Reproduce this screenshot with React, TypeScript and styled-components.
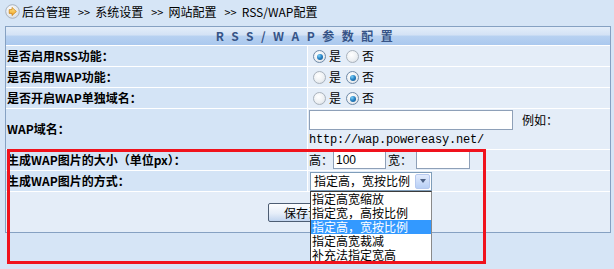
import React from "react";
import styled, { createGlobalStyle } from "styled-components";

const GlobalStyle = createGlobalStyle`
  html, body {
    margin: 0;
    padding: 0;
  }
  body {
    background: #d6e5f6;
    font-family: "Noto Sans CJK SC", "DejaVu Sans", sans-serif;
    font-size: 12px;
    color: #000;
  }
`;

const Page = styled.div`
  position: relative;
  width: 614px;
  height: 269px;
  overflow: hidden;
`;

const Crumb = styled.div`
  display: flex;
  align-items: center;
  height: 26px;
  padding: 0 0 3px 5px;
  box-sizing: border-box;
  line-height: 14px;
  white-space: nowrap;
`;

const Sep = styled.span`
  margin: 0 5px 0 8px;
  font-size: 11px;
`;

const CrumbIcon = () => (
  <svg width="15" height="15" viewBox="0 0 15 15" style={{ marginRight: 2 }}>
    <defs>
      <radialGradient id="ring" cx="40%" cy="35%" r="70%">
        <stop offset="0" stopColor="#ffffff" />
        <stop offset="1" stopColor="#d7dde4" />
      </radialGradient>
      <linearGradient id="arr" x1="0" y1="0" x2="0" y2="1">
        <stop offset="0" stopColor="#ffe88a" />
        <stop offset="1" stopColor="#f0a020" />
      </linearGradient>
    </defs>
    <circle cx="7.5" cy="7.5" r="6.8" fill="url(#ring)" stroke="#9aa5b3" strokeWidth="0.8" />
    <path d="M4.2 5.6 H7 V3.4 L11.4 7.5 L7 11.6 V9.4 H4.2 Z" fill="url(#arr)" stroke="#c47a10" strokeWidth="0.7" strokeLinejoin="round" />
  </svg>
);

const Table = styled.table`
  margin-left: 5px;
  width: 606px;
  border: 1px solid #86a1c2;
  border-collapse: separate;
  border-spacing: 0;
  table-layout: fixed;
`;

const LabelCol = styled.col`
  width: 302px;
`;

const HeadCell = styled.th`
  height: 18px;
  padding: 0;
  border-bottom: 1px solid #ffffff;
  background: linear-gradient(#e3edf9 0%, #d3e2f5 45%, #b7d1f1 50%, #aac8ee 100%);
  color: #365487;
  font-weight: bold;
  letter-spacing: 7.5px;
  text-align: center;
  line-height: 18px;
`;

const Label = styled.td<{ $h?: number }>`
  height: ${(p) => p.$h ?? 20}px;
  padding: 0 0 0 1px;
  border-right: 1px solid #ffffff;
  border-bottom: 1px solid #ffffff;
  background: #d4e4f6;
  font-weight: bold;
  line-height: 14px;
  white-space: nowrap;
`;

const Value = styled.td<{ $top?: boolean }>`
  padding: ${(p) => (p.$top ? "1px 0 0 1px" : "0 0 0 1px")};
  border-bottom: 1px solid #ffffff;
  background: #e4edf8;
  vertical-align: ${(p) => (p.$top ? "top" : "middle")};
  line-height: 14px;
  white-space: nowrap;
`;

const ButtonCell = styled.td`
  height: 40px;
  padding: 0;
  background: #e4edf8;
  text-align: center;
`;

const Line = styled.div`
  display: flex;
  align-items: center;
`;

const Radio = styled.span<{ $on?: boolean }>`
  position: relative;
  display: inline-block;
  width: 11px;
  height: 11px;
  margin: 1px 3px 0 4px;
  border: 1px solid ${(p) => (p.$on ? "#6f8aa8" : "#a9b2bc")};
  border-radius: 50%;
  background: radial-gradient(circle at 40% 35%, #ffffff 0%, #eceff2 60%, #cfd5dc 100%);
  &::after {
    content: "";
    display: ${(p) => (p.$on ? "block" : "none")};
    position: absolute;
    left: 2.5px;
    top: 2.5px;
    width: 6px;
    height: 6px;
    border-radius: 50%;
    background: radial-gradient(circle at 35% 30%, #7fd0f5 0%, #2a86c8 45%, #114f86 100%);
  }
`;

const Opt = styled.span`
  margin-right: 1px;
`;

const TextBox = styled.input<{ $w: number; $h?: number; $ml?: number }>`
  width: ${(p) => p.$w}px;
  height: ${(p) => p.$h ?? 20}px;
  box-sizing: border-box;
  margin: 0 0 0 ${(p) => p.$ml ?? 0}px;
  padding: 0 2px;
  border: 1px solid #8ea0b8;
  background: #ffffff;
  font-family: "Liberation Sans", Arial, sans-serif;
  font-size: 12px;
  color: #000;
  outline: none;
`;

const Hint = styled.span<{ $ml: number }>`
  margin-left: ${(p) => p.$ml}px;
`;

const Url = styled.div`
  margin-top: 3px;
  font-family: "Liberation Mono", "DejaVu Sans Mono", monospace;
  font-size: 12px;
  letter-spacing: -0.2px;
  line-height: 14px;
`;

const SelectWrap = styled.div`
  position: relative;
  z-index: 5;
  width: 122px;
  margin-left: 1px;
`;

const SelectBox = styled.div`
  display: flex;
  align-items: center;
  justify-content: space-between;
  height: 19px;
  box-sizing: border-box;
  padding: 0 1px 0 3px;
  border: 1px solid #7f9db9;
  background: #ffffff;
  line-height: 14px;
`;

const Arrow = styled.span`
  display: flex;
  align-items: center;
  justify-content: center;
  width: 15px;
  height: 15px;
  box-sizing: border-box;
  border: 1px solid #b6c9ef;
  border-radius: 2px;
  background: linear-gradient(#e2ebfd, #b8cff5);
  &::after {
    content: "";
    border-left: 3.5px solid transparent;
    border-right: 3.5px solid transparent;
    border-top: 4px solid #4d6185;
  }
`;

const DropList = styled.div`
  position: absolute;
  top: 100%;
  left: 0;
  width: 122px;
  box-sizing: border-box;
  border: 1px solid #3c3c3c;
  border-right-color: #8a8a8a;
  background: #ffffff;
`;

const Item = styled.div<{ $sel?: boolean }>`
  height: 14px;
  padding-left: 1px;
  line-height: 14px;
  background: ${(p) => (p.$sel ? "#3399ff" : "transparent")};
  color: ${(p) => (p.$sel ? "#ffffff" : "#000000")};
`;

const SaveButton = styled.button`
  width: 80px;
  height: 19px;
  padding: 0;
  border: 1px solid #4d5d73;
  border-radius: 2px;
  background: linear-gradient(#fdfeff 0%, #e6eef9 55%, #c2d5ef 100%);
  font-family: "Noto Sans CJK SC", sans-serif;
  font-size: 12px;
  line-height: 15px;
  color: #000;
`;

const Mark = styled.div`
  position: absolute;
  left: 7px;
  top: 149px;
  width: 479px;
  height: 115px;
  box-sizing: border-box;
  border: 3px solid #f0121c;
  z-index: 10;
  pointer-events: none;
`;

const choices = ["指定高宽缩放", "指定宽，高按比例", "指定高，宽按比例", "指定高宽裁减", "补充法指定宽高"];

const YesNo = ({ on }: { on: boolean }) => (
  <Line>
    <Radio $on={on} />
    <Opt>是</Opt>
    <Radio $on={!on} />
    <Opt>否</Opt>
  </Line>
);

export default function App() {
  return (
    <Page>
      <GlobalStyle />
      <Crumb>
        <CrumbIcon />
        后台管理<Sep>&gt;&gt;</Sep>系统设置<Sep>&gt;&gt;</Sep>网站配置<Sep>&gt;&gt;</Sep>RSS/WAP配置
      </Crumb>
      <Table>
        <colgroup>
          <LabelCol />
          <col />
        </colgroup>
        <thead>
          <tr>
            <HeadCell colSpan={2}>RSS/WAP参数配置</HeadCell>
          </tr>
        </thead>
        <tbody>
          <tr>
            <Label>是否启用RSS功能：</Label>
            <Value>
              <YesNo on />
            </Value>
          </tr>
          <tr>
            <Label>是否启用WAP功能：</Label>
            <Value>
              <YesNo on={false} />
            </Value>
          </tr>
          <tr>
            <Label>是否开启WAP单独域名：</Label>
            <Value>
              <YesNo on={false} />
            </Value>
          </tr>
          <tr>
            <Label $h={40}>WAP域名：</Label>
            <Value $top>
              <Line>
                <TextBox $w={204} readOnly value="" />
                <Hint $ml={9}>例如：</Hint>
              </Line>
              <Url>http://wap.powereasy.net/</Url>
            </Value>
          </tr>
          <tr>
            <Label>生成WAP图片的大小（单位px）：</Label>
            <Value>
              <Line>
                高：
                <TextBox $w={53} $h={18} readOnly value="100" />
                <Hint $ml={2}>宽：</Hint>
                <TextBox $w={54} $h={18} $ml={4} readOnly value="" />
              </Line>
            </Value>
          </tr>
          <tr>
            <Label>生成WAP图片的方式：</Label>
            <Value>
              <SelectWrap>
                <SelectBox>
                  <span>指定高，宽按比例</span>
                  <Arrow />
                </SelectBox>
                <DropList>
                  {choices.map((c, i) => (
                    <Item key={c} $sel={i === 2}>
                      {c}
                    </Item>
                  ))}
                </DropList>
              </SelectWrap>
            </Value>
          </tr>
          <tr>
            <ButtonCell colSpan={2}>
              <SaveButton>保存设置</SaveButton>
            </ButtonCell>
          </tr>
        </tbody>
      </Table>
      <Mark />
    </Page>
  );
}
